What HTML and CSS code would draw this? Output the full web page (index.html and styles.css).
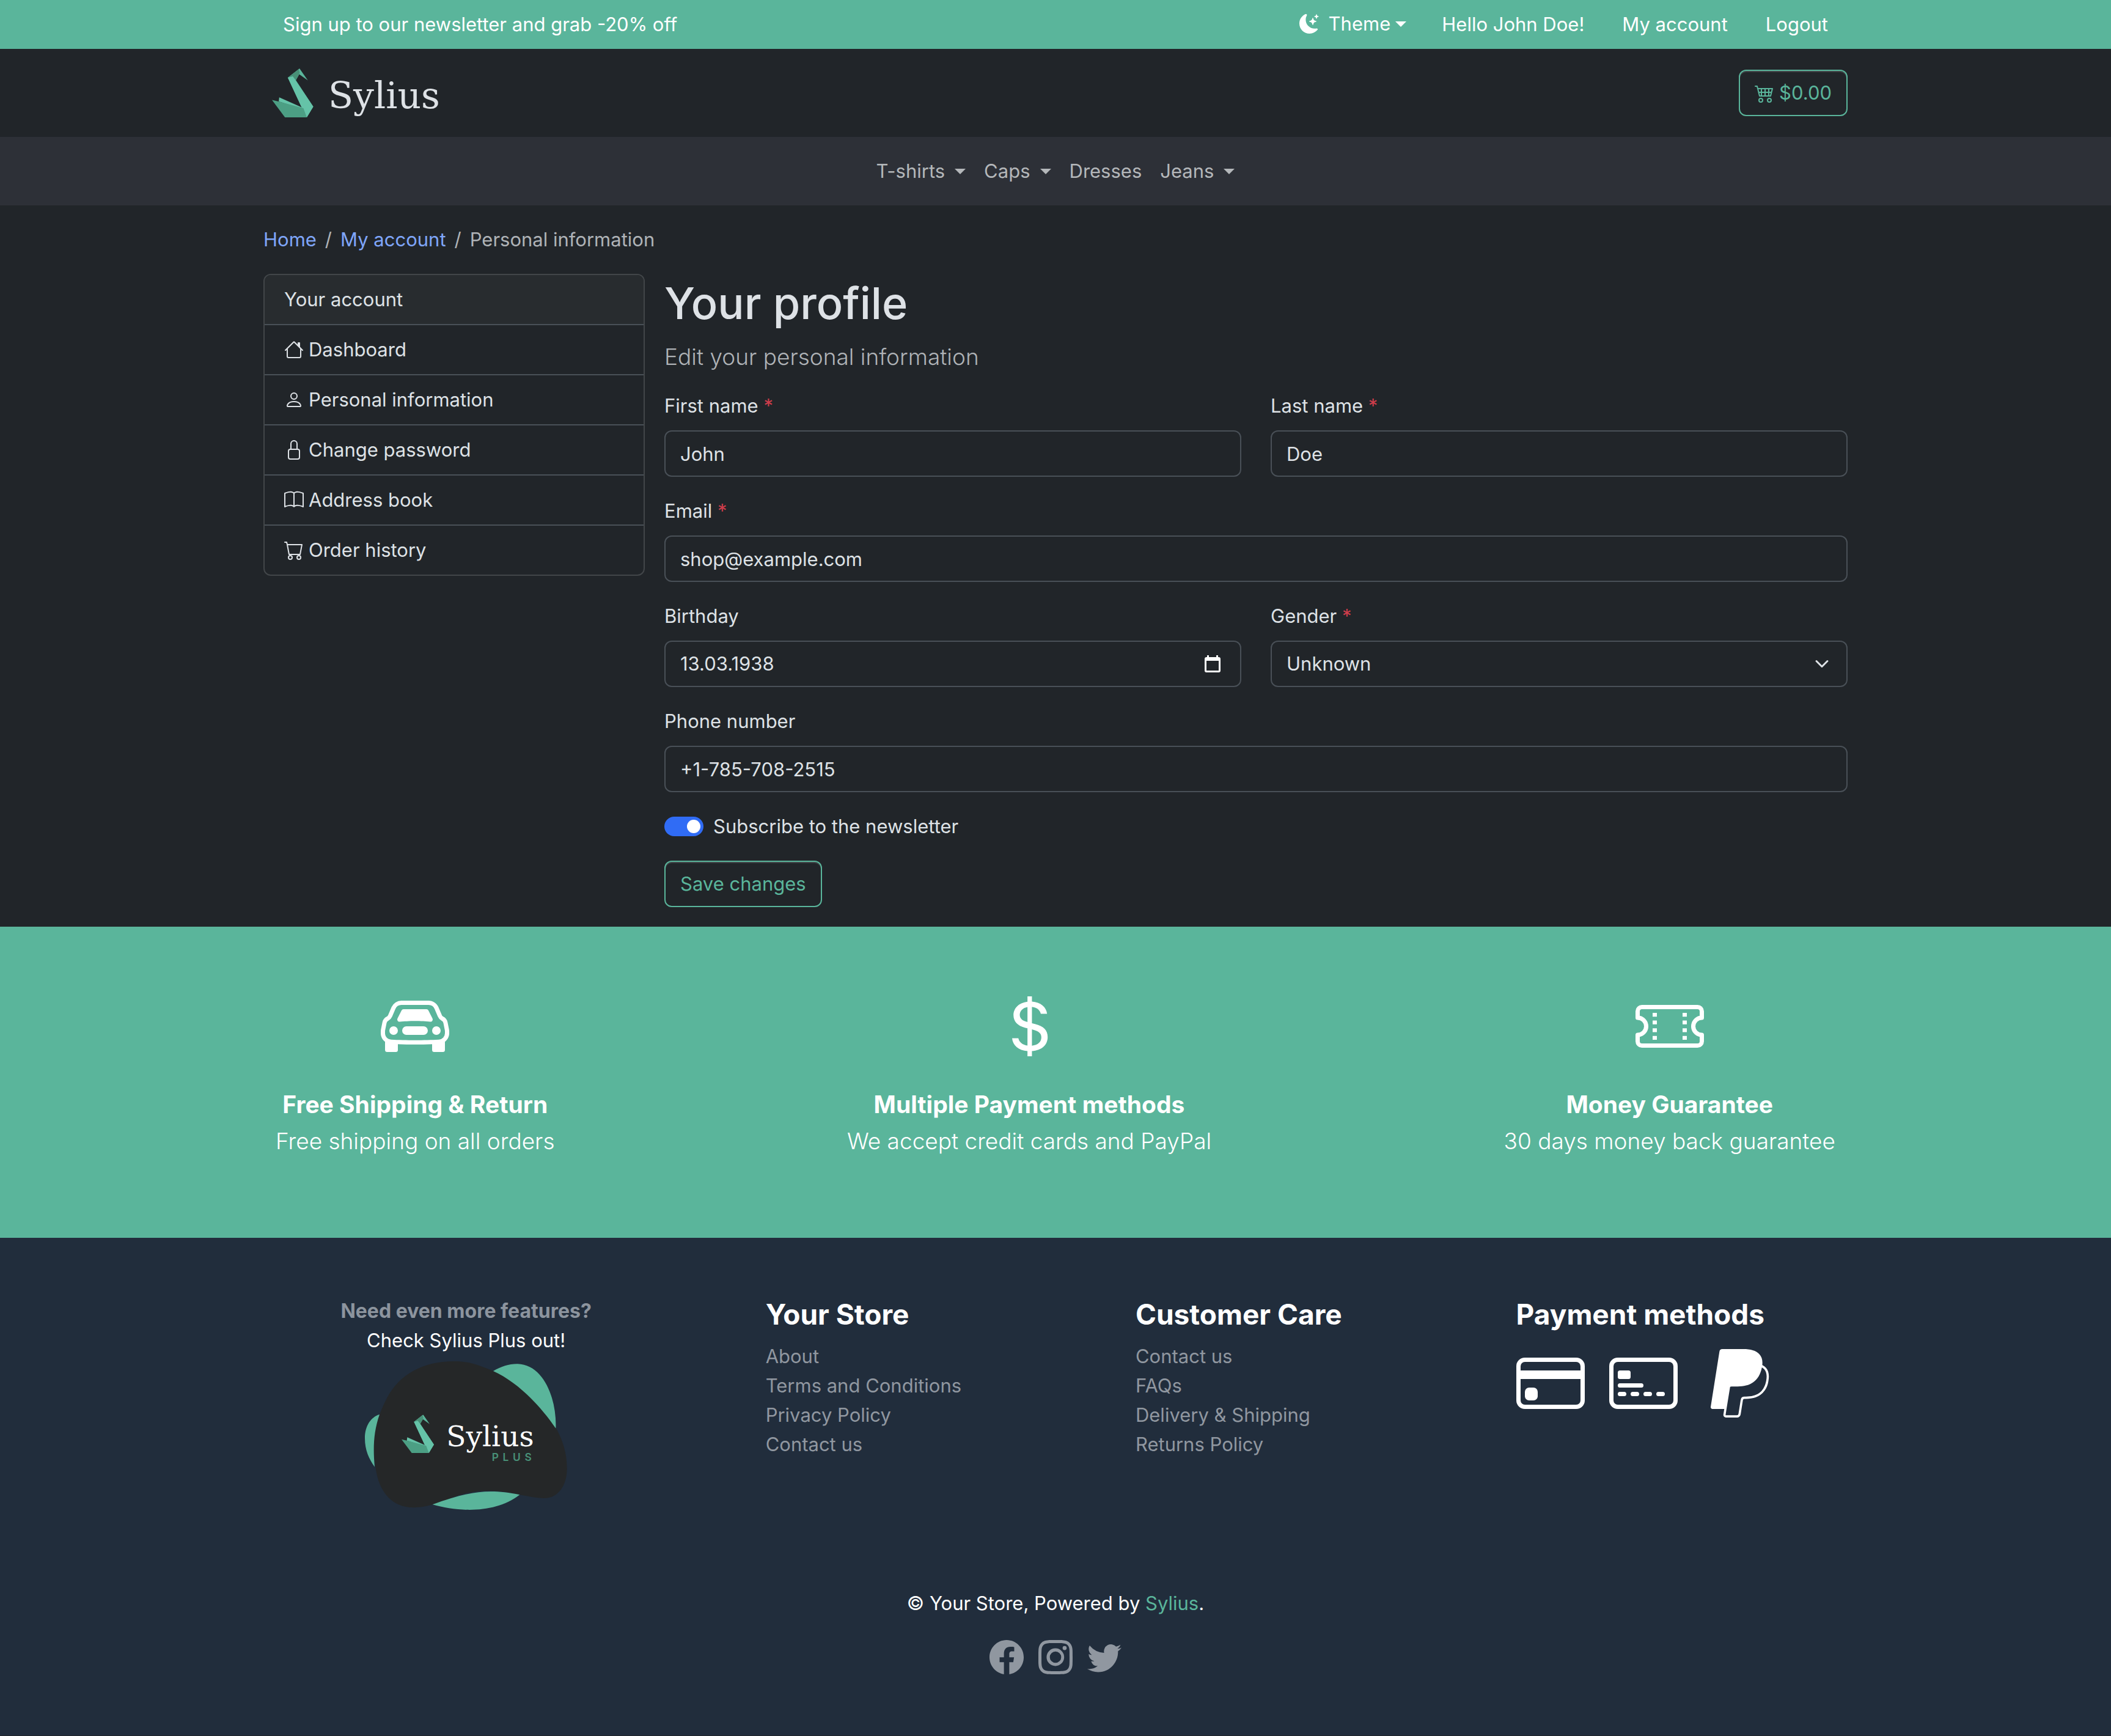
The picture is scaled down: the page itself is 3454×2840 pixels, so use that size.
FILE: index.html
```html
<!DOCTYPE html>
<html lang="en">
<head>
<meta charset="utf-8">
<meta name="viewport" content="width=device-width, initial-scale=1">
<title>Your profile | Your Store</title>
<link rel="stylesheet" href="styles.css">
</head>
<body>
<svg class="sprite" aria-hidden="true">
  <symbol id="swan" viewBox="360 615 160 188">
    <path fill="#5ab59b" d="M466 615 498 661 465 637 452 660 519 762 494 803 473 762 421 650Z"/>
    <path fill="#65c3a8" d="M421 650 440 645 519 762 494 803 473 762Z"/>
    <path fill="#489077" d="M421 650 463 618 467 632 452 660 440 645Z"/>
    <path fill="#65c3a8" d="M388 726 474 764 480 772 386 742Z"/>
    <path fill="#4c9f84" d="M360 736 390 743 481 768 494 803 410 803Z"/>
  </symbol>
</svg>

<div class="topbar">
  <div class="container topbar-row">
    <p class="topbar-note">Sign up to our newsletter and grab -20% off</p>
    <div class="topbar-menu">
      <button class="theme" type="button">
        <svg class="icon" viewBox="0 0 16 16"><path d="M6 .278a.77.77 0 0 1 .08.858 7.2 7.2 0 0 0-.878 3.46c0 4.021 3.278 7.277 7.318 7.277q.792-.001 1.533-.16a.79.79 0 0 1 .81.316.73.73 0 0 1-.031.893A8.35 8.35 0 0 1 8.344 16C3.734 16 0 12.286 0 7.71 0 4.266 2.114 1.312 5.124.06A.75.75 0 0 1 6 .278"/><path d="M10.794 3.148a.217.217 0 0 1 .412 0l.387 1.162c.173.518.579.924 1.097 1.097l1.162.387a.217.217 0 0 1 0 .412l-1.162.387a1.73 1.73 0 0 0-1.097 1.097l-.387 1.162a.217.217 0 0 1-.412 0l-.387-1.162A1.73 1.73 0 0 0 9.31 6.593l-1.162-.387a.217.217 0 0 1 0-.412l1.162-.387a1.73 1.73 0 0 0 1.097-1.097zM13.863.099a.145.145 0 0 1 .274 0l.258.774c.115.346.386.617.732.732l.774.258a.145.145 0 0 1 0 .274l-.774.258a1.16 1.16 0 0 0-.732.732l-.258.774a.145.145 0 0 1-.274 0l-.258-.774a1.16 1.16 0 0 0-.732-.732l-.774-.258a.145.145 0 0 1 0-.274l.774-.258c.346-.115.617-.386.732-.732z"/></svg>
        <span class="caret">Theme</span>
      </button>
      <span>Hello John Doe!</span>
      <a href="#">My account</a>
      <a href="#">Logout</a>
    </div>
  </div>
</div>

<header class="header">
  <div class="container header-row">
    <a class="logo" href="#"><svg class="logo-swan" aria-hidden="true"><use href="#swan"/></svg><span>Sylius</span></a>
    <button class="btn" type="button">
      <svg class="icon" viewBox="0 0 16 16"><path d="M0 2.5A.5.5 0 0 1 .5 2H2a.5.5 0 0 1 .485.379L2.89 4H14.5a.5.5 0 0 1 .485.621l-1.5 6A.5.5 0 0 1 13 11H4a.5.5 0 0 1-.485-.379L1.61 3H.5a.5.5 0 0 1-.5-.5M3.14 5l.5 2H5V5zM6 5v2h2V5zm3 0v2h2V5zm3 0v2h1.36l.5-2zm1.11 3H12v2h.61zM11 8H9v2h2zM8 8H6v2h2zM5 8H3.89l.5 2H5zm0 5a1 1 0 1 0 0 2 1 1 0 0 0 0-2m-2 1a2 2 0 1 1 4 0 2 2 0 0 1-4 0m9-1a1 1 0 1 0 0 2 1 1 0 0 0 0-2m-2 1a2 2 0 1 1 4 0 2 2 0 0 1-4 0"/></svg>
      $0.00
    </button>
  </div>
</header>

<nav class="mainnav">
  <a class="caret" href="#">T-shirts</a>
  <a class="caret" href="#">Caps</a>
  <a href="#">Dresses</a>
  <a class="caret" href="#">Jeans</a>
</nav>

<main class="container main">
  <nav class="breadcrumb" aria-label="Breadcrumb">
    <a href="#">Home</a><span>/</span><a href="#">My account</a><span>/</span><span>Personal information</span>
  </nav>

  <div class="account">
    <aside class="menu">
      <div class="menu-head">Your account</div>
      <a href="#"><svg class="icon" viewBox="0 0 16 16"><path d="M8.707 1.5a1 1 0 0 0-1.414 0L.646 8.146a.5.5 0 0 0 .708.708L2 8.207V13.5A1.5 1.5 0 0 0 3.5 15h9a1.5 1.5 0 0 0 1.5-1.5V8.207l.646.647a.5.5 0 0 0 .708-.708L13 5.793V2.5a.5.5 0 0 0-.5-.5h-1a.5.5 0 0 0-.5.5v1.293zM13 7.207V13.5a.5.5 0 0 1-.5.5h-9a.5.5 0 0 1-.5-.5V7.207l5-5z"/></svg>Dashboard</a>
      <a href="#"><svg class="icon" viewBox="0 0 16 16"><path d="M8 8a3 3 0 1 0 0-6 3 3 0 0 0 0 6m2-3a2 2 0 1 1-4 0 2 2 0 0 1 4 0m4 8c0 1-1 1-1 1H3s-1 0-1-1 1-4 6-4 6 3 6 4m-1-.004c-.001-.246-.154-.986-.832-1.664C11.516 10.68 10.289 10 8 10s-3.516.68-4.168 1.332c-.678.678-.83 1.418-.832 1.664z"/></svg>Personal information</a>
      <a href="#"><svg class="icon" viewBox="0 0 16 16"><path d="M8 1a2 2 0 0 1 2 2v4H6V3a2 2 0 0 1 2-2m3 6V3a3 3 0 0 0-6 0v4a2 2 0 0 0-2 2v5a2 2 0 0 0 2 2h6a2 2 0 0 0 2-2V9a2 2 0 0 0-2-2M5 8h6a1 1 0 0 1 1 1v5a1 1 0 0 1-1 1H5a1 1 0 0 1-1-1V9a1 1 0 0 1 1-1"/></svg>Change password</a>
      <a href="#"><svg class="icon" viewBox="0 0 16 16"><path d="M1 2.828c.885-.37 2.154-.769 3.388-.893 1.33-.134 2.458.063 3.112.752v9.746c-.935-.53-2.12-.603-3.213-.493-1.18.12-2.37.461-3.287.811zm7.5-.141c.654-.689 1.782-.886 3.112-.752 1.234.124 2.503.523 3.388.893v9.923c-.918-.35-2.107-.692-3.287-.81-1.094-.111-2.278-.039-3.213.492zM8 1.783C7.015.936 5.587.81 4.287.94c-1.514.153-3.042.672-3.994 1.105A.5.5 0 0 0 0 2.5v11a.5.5 0 0 0 .707.455c.882-.4 2.303-.881 3.68-1.02 1.409-.142 2.59.087 3.223.877a.5.5 0 0 0 .78 0c.633-.79 1.814-1.019 3.222-.877 1.378.139 2.8.62 3.681 1.02A.5.5 0 0 0 16 13.5v-11a.5.5 0 0 0-.293-.455c-.952-.433-2.48-.952-3.994-1.105C10.413.809 8.985.936 8 1.783"/></svg>Address book</a>
      <a href="#"><svg class="icon" viewBox="0 0 16 16"><path d="M0 1.5A.5.5 0 0 1 .5 1H2a.5.5 0 0 1 .485.379L2.89 3H14.5a.5.5 0 0 1 .491.592l-1.5 8A.5.5 0 0 1 13 12H4a.5.5 0 0 1-.491-.408L2.01 3.607 1.61 2H.5a.5.5 0 0 1-.5-.5M3.102 4l1.313 7h8.17l1.313-7zM5 12a2 2 0 1 0 0 4 2 2 0 0 0 0-4m7 0a2 2 0 1 0 0 4 2 2 0 0 0 0-4m-7 1a1 1 0 1 1 0 2 1 1 0 0 1 0-2m7 0a1 1 0 1 1 0 2 1 1 0 0 1 0-2"/></svg>Order history</a>
    </aside>

    <section class="profile">
      <h1>Your profile</h1>
      <p class="lead">Edit your personal information</p>

      <form class="form">
        <div class="field">
          <label for="first-name">First name <span class="required">*</span></label>
          <input class="control" id="first-name" type="text" value="John">
        </div>
        <div class="field">
          <label for="last-name">Last name <span class="required">*</span></label>
          <input class="control" id="last-name" type="text" value="Doe">
        </div>
        <div class="field wide">
          <label for="email">Email <span class="required">*</span></label>
          <input class="control" id="email" type="email" value="shop@example.com">
        </div>
        <div class="field">
          <label for="birthday">Birthday</label>
          <div class="control date">
            <input id="birthday" type="text" value="13.03.1938">
            <button type="button" aria-label="Open calendar"><svg viewBox="0 0 26 28"><path fill-rule="evenodd" d="M4 0h3v3h12V0h3v3h1a3 3 0 0 1 3 3v19a3 3 0 0 1-3 3H3a3 3 0 0 1-3-3V6a3 3 0 0 1 3-3h1zM3 9v16h20V9z"/></svg></button>
          </div>
        </div>
        <div class="field">
          <label for="gender">Gender <span class="required">*</span></label>
          <div class="select">
            <select class="control" id="gender"><option>Unknown</option><option>Male</option><option>Female</option></select>
            <svg viewBox="0 0 16 16" aria-hidden="true"><path d="m2 5 6 6 6-6"/></svg>
          </div>
        </div>
        <div class="field wide">
          <label for="phone">Phone number</label>
          <input class="control" id="phone" type="tel" value="+1-785-708-2515">
        </div>
        <div class="wide check">
          <input class="switch" id="subscribe" type="checkbox" role="switch" checked>
          <label for="subscribe">Subscribe to the newsletter</label>
        </div>
        <div class="wide actions"><button class="btn" type="submit">Save changes</button></div>
      </form>
    </section>
  </div>
</main>

<section class="benefits">
  <div class="container benefits-row">
    <div class="benefit">
      <svg viewBox="0 0 16 16"><path d="M4 9a1 1 0 1 1-2 0 1 1 0 0 1 2 0m10 0a1 1 0 1 1-2 0 1 1 0 0 1 2 0M6 8a1 1 0 0 0 0 2h4a1 1 0 1 0 0-2zM4.862 4.276 3.906 6.19a.51.51 0 0 0 .497.731c.91-.073 2.35-.17 3.597-.17s2.688.097 3.597.17a.51.51 0 0 0 .497-.731l-.956-1.913A.5.5 0 0 0 10.691 4H5.309a.5.5 0 0 0-.447.276"/><path d="M2.52 3.515A2.5 2.5 0 0 1 4.82 2h6.362c1 0 1.904.596 2.298 1.515l.792 1.848c.075.175.21.319.38.404.5.25.855.715.965 1.262l.335 1.679q.05.242.049.49v.413c0 .814-.39 1.543-1 1.997V13.5a.5.5 0 0 1-.5.5h-2a.5.5 0 0 1-.5-.5v-1.338c-1.292.048-2.745.088-4 .088s-2.708-.04-4-.088V13.5a.5.5 0 0 1-.5.5h-2a.5.5 0 0 1-.5-.5v-1.892c-.61-.454-1-1.183-1-1.997v-.413a2.5 2.5 0 0 1 .049-.49l.335-1.68c.11-.546.465-1.012.964-1.261a.8.8 0 0 0 .381-.404l.792-1.848ZM4.82 3a1.5 1.5 0 0 0-1.379.91l-.792 1.847a1.8 1.8 0 0 1-.853.904.8.8 0 0 0-.43.564L1.03 8.904a1.5 1.5 0 0 0-.03.294v.413c0 .796.62 1.448 1.408 1.484 1.555.07 3.786.155 5.592.155s4.037-.084 5.592-.155A1.48 1.48 0 0 0 15 9.611v-.413q0-.148-.03-.294l-.335-1.68a.8.8 0 0 0-.43-.563 1.8 1.8 0 0 1-.853-.904l-.792-1.848A1.5 1.5 0 0 0 11.18 3z"/></svg>
      <strong>Free Shipping &amp; Return</strong>
      <p>Free shipping on all orders</p>
    </div>
    <div class="benefit">
      <svg viewBox="0 0 16 16"><path d="M4 10.781c.148 1.667 1.513 2.85 3.591 3.003V15h1.043v-1.216c2.27-.179 3.678-1.438 3.678-3.3 0-1.59-.947-2.51-2.956-3.028l-.722-.187V3.467c1.122.11 1.879.714 2.07 1.616h1.47c-.166-1.6-1.54-2.748-3.54-2.875V1H7.591v1.233c-1.939.23-3.27 1.472-3.27 3.156 0 1.454.966 2.483 2.661 2.917l.61.162v4.031c-1.149-.17-1.94-.8-2.131-1.718zm3.391-3.836c-1.043-.263-1.6-.825-1.6-1.616 0-.944.704-1.641 1.8-1.828v3.495l-.2-.05zm1.591 1.872c1.287.323 1.852.859 1.852 1.769 0 1.097-.826 1.828-2.2 1.939V8.73z"/></svg>
      <strong>Multiple Payment methods</strong>
      <p>We accept credit cards and PayPal</p>
    </div>
    <div class="benefit">
      <svg viewBox="0 0 16 16"><path d="M4 4.85v.9h1v-.9zm7 0v.9h1v-.9zm-7 1.8v.9h1v-.9zm7 0v.9h1v-.9zm-7 1.8v.9h1v-.9zm7 0v.9h1v-.9zm-7 1.8v.9h1v-.9zm7 0v.9h1v-.9z"/><path d="M1.5 3A1.5 1.5 0 0 0 0 4.5V6a.5.5 0 0 0 .5.5 1.5 1.5 0 1 1 0 3 .5.5 0 0 0-.5.5v1.5A1.5 1.5 0 0 0 1.5 13h13a1.5 1.5 0 0 0 1.5-1.5V10a.5.5 0 0 0-.5-.5 1.5 1.5 0 0 1 0-3A.5.5 0 0 0 16 6V4.5A1.5 1.5 0 0 0 14.5 3zM1 4.5a.5.5 0 0 1 .5-.5h13a.5.5 0 0 1 .5.5v1.05a2.5 2.5 0 0 0 0 4.9v1.05a.5.5 0 0 1-.5.5h-13a.5.5 0 0 1-.5-.5v-1.05a2.5 2.5 0 0 0 0-4.9z"/></svg>
      <strong>Money Guarantee</strong>
      <p>30 days money back guarantee</p>
    </div>
  </div>
</section>

<footer class="footer">
  <div class="footer-cols">
    <div class="plus">
      <strong>Need even more features?</strong>
      <a href="#">Check Sylius Plus out!
        <svg class="plus-logo" viewBox="180 353 993 729">
          <path fill="#252728" d="M620 353C700 353 740 375 810 400C930 450 1040 560 1118 680C1150 740 1172 800 1172 880C1172 960 1130 1025 1060 1025C1020 1025 980 1015 940 1008C800 975 700 985 600 1025C570 1038 545 1048 512 1056C470 1068 440 1072 400 1070C300 1060 250 980 235 890C230 850 220 800 225 740C232 650 260 590 290 530C350 420 460 353 620 353Z"/>
          <path fill="#5ab59b" d="M810 401C850 378 890 365 930 366C1060 370 1122 540 1117 682C1040 570 930 455 810 401ZM252 614C210 626 180 670 180 730C180 790 200 830 228 871C220 780 222 700 252 614ZM512 1056C640 1092 820 1102 940 1008C780 975 680 995 512 1056Z"/>
          <use href="#swan" x="360" y="615" width="160" height="188"/>
          <text class="plus-name" x="580" y="770">Sylius</text>
          <text class="plus-tag" x="803" y="842">PLUS</text>
        </svg>
      </a>
    </div>
    <div class="links">
      <h2>Your Store</h2>
      <a href="#">About</a>
      <a href="#">Terms and Conditions</a>
      <a href="#">Privacy Policy</a>
      <a href="#">Contact us</a>
    </div>
    <div class="links">
      <h2>Customer Care</h2>
      <a href="#">Contact us</a>
      <a href="#">FAQs</a>
      <a href="#">Delivery &amp; Shipping</a>
      <a href="#">Returns Policy</a>
    </div>
    <div class="links">
      <h2>Payment methods</h2>
      <div class="payments">
        <svg viewBox="0 0 16 16"><path d="M0 4a2 2 0 0 1 2-2h12a2 2 0 0 1 2 2v8a2 2 0 0 1-2 2H2a2 2 0 0 1-2-2zm2-1a1 1 0 0 0-1 1v1h14V4a1 1 0 0 0-1-1zm13 4H1v5a1 1 0 0 0 1 1h12a1 1 0 0 0 1-1z"/><path d="M2 10a1 1 0 0 1 1-1h1a1 1 0 0 1 1 1v1a1 1 0 0 1-1 1H3a1 1 0 0 1-1-1z"/></svg>
        <svg viewBox="0 0 16 16"><path d="M14 3a1 1 0 0 1 1 1v8a1 1 0 0 1-1 1H2a1 1 0 0 1-1-1V4a1 1 0 0 1 1-1zM2 2a2 2 0 0 0-2 2v8a2 2 0 0 0 2 2h12a2 2 0 0 0 2-2V4a2 2 0 0 0-2-2z"/><path d="M2 5.5a.5.5 0 0 1 .5-.5h2a.5.5 0 0 1 .5.5v1a.5.5 0 0 1-.5.5h-2a.5.5 0 0 1-.5-.5zm0 3a.5.5 0 0 1 .5-.5h5a.5.5 0 0 1 0 1h-5a.5.5 0 0 1-.5-.5m0 2a.5.5 0 0 1 .5-.5h1a.5.5 0 0 1 0 1h-1a.5.5 0 0 1-.5-.5m3 0a.5.5 0 0 1 .5-.5h1a.5.5 0 0 1 0 1h-1a.5.5 0 0 1-.5-.5m3 0a.5.5 0 0 1 .5-.5h1a.5.5 0 0 1 0 1h-1a.5.5 0 0 1-.5-.5m3 0a.5.5 0 0 1 .5-.5h1a.5.5 0 0 1 0 1h-1a.5.5 0 0 1-.5-.5"/></svg>
        <svg viewBox="0 0 16 16"><path d="M14.06 3.713c.12-1.071-.093-1.832-.702-2.526C12.628.356 11.312 0 9.626 0H4.734a.7.7 0 0 0-.691.59L2.005 13.509a.42.42 0 0 0 .415.486h2.756l-.202 1.28a.628.628 0 0 0 .62.726H8.14c.429 0 .793-.31.862-.731l.025-.13.48-3.043.03-.164.001-.007a.35.35 0 0 1 .348-.297h.38c1.266 0 2.425-.256 3.345-.91q.57-.403.993-1.005a4.94 4.94 0 0 0 .88-2.195c.242-1.246.13-2.356-.57-3.154a2.7 2.7 0 0 0-.76-.59l-.094-.061ZM6.543 8.82a.7.7 0 0 1 .321-.079H8.3c2.82 0 5.027-1.144 5.672-4.456l.003-.016q.326.186.548.438c.546.623.679 1.535.45 2.71-.272 1.397-.866 2.307-1.663 2.874-.802.57-1.842.815-3.043.815h-.38a.87.87 0 0 0-.863.734l-.03.164-.48 3.043-.024.13-.001.004a.35.35 0 0 1-.348.296H5.595a.106.106 0 0 1-.105-.123l.208-1.32z"/></svg>
      </div>
    </div>
  </div>

  <p class="copyright">© Your Store, Powered by <a href="#">Sylius</a>.</p>
  <div class="social">
    <a href="#" aria-label="Facebook"><svg viewBox="0 0 16 16"><path d="M16 8.049c0-4.446-3.582-8.05-8-8.05C3.58 0-.002 3.603-.002 8.05c0 4.017 2.926 7.347 6.75 7.951v-5.625h-2.03V8.05H6.75V6.275c0-2.017 1.195-3.131 3.022-3.131.876 0 1.791.157 1.791.157v1.98h-1.009c-.993 0-1.303.621-1.303 1.258v1.51h2.218l-.354 2.326H9.25V16c3.824-.604 6.75-3.934 6.75-7.951"/></svg></a>
    <a href="#" aria-label="Instagram"><svg viewBox="0 0 16 16"><path d="M8 0C5.829 0 5.556.01 4.703.048 3.85.088 3.269.222 2.76.42a3.9 3.9 0 0 0-1.417.923A3.9 3.9 0 0 0 .42 2.76C.222 3.268.087 3.85.048 4.7.01 5.555 0 5.827 0 8.001c0 2.172.01 2.444.048 3.297.04.852.174 1.433.372 1.942.205.526.478.972.923 1.417.444.445.89.719 1.416.923.51.198 1.09.333 1.942.372C5.555 15.99 5.827 16 8 16s2.444-.01 3.298-.048c.851-.04 1.434-.174 1.943-.372a3.9 3.9 0 0 0 1.416-.923c.445-.445.718-.891.923-1.417.197-.509.332-1.09.372-1.942C15.99 10.445 16 10.173 16 8s-.01-2.445-.048-3.299c-.04-.851-.175-1.433-.372-1.941a3.9 3.9 0 0 0-.923-1.417A3.9 3.9 0 0 0 13.24.42c-.51-.198-1.092-.333-1.943-.372C10.443.01 10.172 0 7.998 0zm-.717 1.442h.718c2.136 0 2.389.007 3.232.046.78.035 1.204.166 1.486.275.373.145.64.319.92.599s.453.546.598.92c.11.281.24.705.275 1.485.039.843.047 1.096.047 3.231s-.008 2.389-.047 3.232c-.035.78-.166 1.203-.275 1.485a2.5 2.5 0 0 1-.599.919c-.28.28-.546.453-.92.598-.28.11-.704.24-1.485.276-.843.038-1.096.047-3.232.047s-2.39-.009-3.233-.047c-.78-.036-1.203-.166-1.485-.276a2.5 2.5 0 0 1-.92-.598 2.5 2.5 0 0 1-.6-.92c-.109-.281-.24-.705-.275-1.485-.038-.843-.046-1.096-.046-3.233s.008-2.388.046-3.231c.036-.78.166-1.204.276-1.486.145-.373.319-.64.599-.92s.546-.453.92-.598c.282-.11.705-.24 1.485-.276.738-.034 1.024-.044 2.515-.045zm4.988 1.328a.96.96 0 1 0 0 1.92.96.96 0 0 0 0-1.92m-4.27 1.122a4.109 4.109 0 1 0 0 8.217 4.109 4.109 0 0 0 0-8.217m0 1.441a2.667 2.667 0 1 1 0 5.334 2.667 2.667 0 0 1 0-5.334"/></svg></a>
    <a href="#" aria-label="Twitter"><svg viewBox="0 0 16 16"><path d="M5.026 15c6.038 0 9.341-5.003 9.341-9.334q.002-.211-.006-.422A6.7 6.7 0 0 0 16 3.542a6.7 6.7 0 0 1-1.889.518 3.3 3.3 0 0 0 1.447-1.817 6.5 6.5 0 0 1-2.087.793A3.286 3.286 0 0 0 7.875 6.03a9.32 9.32 0 0 1-6.767-3.429 3.29 3.29 0 0 0 1.018 4.382A3.3 3.3 0 0 1 .64 6.575v.045a3.29 3.29 0 0 0 2.632 3.218 3.2 3.2 0 0 1-.865.115 3 3 0 0 1-.614-.057 3.28 3.28 0 0 0 3.067 2.277A6.6 6.6 0 0 1 .78 13.58a6 6 0 0 1-.78-.045A9.34 9.34 0 0 0 5.026 15"/></svg></a>
  </div>
</footer>
</body>
</html>
```
FILE: styles.css
```css
:root {
  --green: #5ab59b;
  --body: #212529;
  --text: #dee2e6;
  --muted: #afb3b7;
  --border: #495057;
}

*, *::before, *::after { box-sizing: border-box; }

body {
  margin: 0;
  background: var(--body);
  color: var(--text);
  font: 400 31px/48px Inter, "Liberation Sans", sans-serif;
}

h1, h2, p { margin: 0; }
a { color: inherit; text-decoration: none; }
button, input, select { font: inherit; color: inherit; }
button { cursor: pointer; }
svg { display: block; fill: currentColor; flex: none; }

.sprite { position: absolute; width: 0; height: 0; }
.icon { width: 32px; height: 32px; }

.container {
  width: 100%;
  max-width: 2640px;
  margin: 0 auto;
  padding: 0 24px;
}

.caret { display: flex; align-items: center; }
.caret::after {
  content: "";
  margin-left: 16px;
  border: 9px solid transparent;
  border-top-color: currentColor;
  border-bottom: 0;
}

/* Top bar */
.topbar { background: var(--green); color: #fff; }
.topbar-row { display: flex; justify-content: space-between; padding: 16px 56px; }
.topbar-menu { display: flex; gap: 62px; }
.theme {
  display: flex;
  align-items: center;
  gap: 16px;
  height: 46px;
  margin-right: -4px;
  padding: 0;
  border: 0;
  background: none;
}
.theme .caret::after { margin-left: 8px; }

/* Header */
.header-row {
  display: flex;
  align-items: center;
  justify-content: space-between;
  min-height: 144px;
}
.logo {
  display: flex;
  align-items: center;
  gap: 24px;
  margin-left: 14px;
  font: 400 60px/80px "DejaVu Serif", serif;
}
.logo span { padding-top: 8px; }
.logo-swan { width: 68px; height: 80px; }

.btn {
  display: inline-flex;
  align-items: center;
  gap: 8px;
  height: 76px;
  padding: 0 24px;
  border: 2px solid var(--green);
  border-radius: 12px;
  background: transparent;
  box-shadow: inset 0 2px 0 rgba(255, 255, 255, .15);
  color: var(--green);
}

/* Category navigation */
.mainnav {
  display: flex;
  justify-content: center;
  gap: 30px;
  padding: 32px;
  background: #2d3037;
  color: #b4b7ba;
}

/* Account page */
.main { padding-top: 32px; padding-bottom: 32px; }
.breadcrumb { display: flex; gap: 14px; margin-bottom: 32px; color: var(--muted); }
.breadcrumb a { color: #7fa6fa; }

.account {
  display: grid;
  grid-template-columns: minmax(0, 624fr) minmax(0, 1936fr);
  gap: 32px;
  align-items: start;
}

.menu { border: 2px solid #424649; border-radius: 12px; overflow: hidden; }
.menu-head { padding: 16px 32px; background: #282c2f; }
.menu a {
  display: flex;
  align-items: center;
  gap: 8px;
  padding: 16px 32px;
  border-top: 2px solid var(--border);
}

h1 { margin-bottom: 16px; font-size: 72px; font-weight: 500; line-height: 96px; }
.lead { margin-bottom: 32px; color: var(--muted); font-size: 37px; font-weight: 300; }

.form { display: grid; grid-template-columns: 1fr 1fr; gap: 32px 48px; }
.wide { grid-column: 1 / -1; }
.field label { display: block; margin-bottom: 16px; }
.required { color: #cf3d4b; }

.control {
  display: block;
  width: 100%;
  height: 76px;
  padding: 0 24px;
  border: 2px solid var(--border);
  border-radius: 12px;
  background: var(--body);
  appearance: none;
}
.date { display: flex; align-items: center; padding-right: 32px; }
.date input { flex: 1; min-width: 0; padding: 0; border: 0; background: none; outline: 0; }
.date button { padding: 0; border: 0; background: none; color: #fff; }
.date svg { width: 26px; height: 28px; }

.select { position: relative; }
.select svg {
  position: absolute;
  top: 26px;
  right: 30px;
  width: 24px;
  height: 24px;
  fill: none;
  stroke: currentColor;
  stroke-width: 2;
  stroke-linecap: round;
  stroke-linejoin: round;
  pointer-events: none;
}

.check { display: flex; align-items: center; gap: 16px; }
.actions { display: flex; }
.switch {
  display: flex;
  align-items: center;
  justify-content: flex-end;
  width: 64px;
  height: 32px;
  margin: 0;
  padding: 5px;
  border-radius: 16px;
  background: #306cf5;
  appearance: none;
}
.switch::before { content: ""; width: 22px; height: 22px; border-radius: 50%; background: #fff; }

/* Benefits */
.benefits { background: var(--green); color: #fff; }
.benefits-row {
  display: flex;
  justify-content: space-between;
  padding: 107px 44px 128px;
  font-size: 37px;
  line-height: 60px;
}
.benefit { display: flex; flex-direction: column; align-items: center; text-align: center; font-weight: 300; }
.benefit svg { width: 112px; height: 112px; margin-bottom: 42px; }
.benefit strong { font-size: 39px; font-weight: 700; }

/* Footer */
.footer { padding: 96px 0 100px; background: #212d3c; color: #fff; }
.footer-cols {
  display: flex;
  justify-content: space-around;
  max-width: 2624px;
  min-height: 478px;
  margin: 0 auto;
}
.plus { text-align: center; }
.plus strong { display: block; color: #8c949e; font-size: 32px; font-weight: 700; }
.plus-logo { width: 331px; height: 243px; margin: 10px auto 0; }
.plus-name { fill: #fff; font: 400 141px "DejaVu Serif", serif; }
.plus-tag { fill: #489077; font: 600 52px Inter, sans-serif; letter-spacing: 20px; }

.links h2 { margin-bottom: 16px; font-size: 46px; font-weight: 700; line-height: 58px; }
.links a { display: block; color: #9097a0; }
.payments { display: flex; gap: 40px; margin-top: 28px; }
.payments svg { width: 112px; height: 112px; }

.copyright { text-align: center; }
.copyright a { color: var(--green); }
.social { display: flex; justify-content: center; gap: 24px; margin-top: 36px; color: #9097a0; }
.social svg { width: 56px; height: 56px; }
```
